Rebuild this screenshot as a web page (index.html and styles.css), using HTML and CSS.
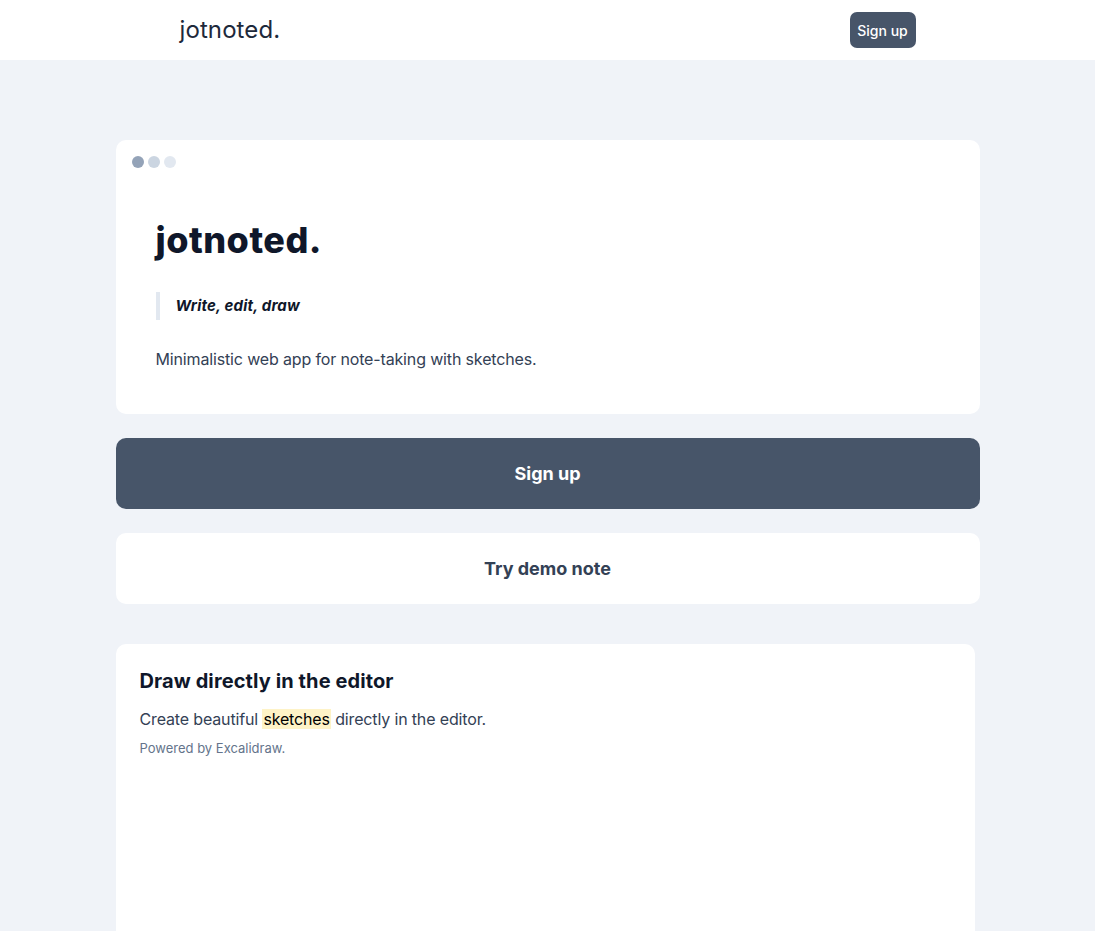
FILE: index.html
```html
<!DOCTYPE html>
<html lang="en">
<head>
<meta charset="utf-8">
<title>jotnoted.</title>
<link rel="stylesheet" href="styles.css">
</head>
<body>
<header class="topbar">
  <div class="topbar-inner">
    <a class="brand" href="#">jotnoted.</a>
    <a class="nav-btn" href="#">Sign up</a>
  </div>
</header>
<main class="main">
  <section class="hero card">
    <div class="dots"><span class="dot d1"></span><span class="dot d2"></span><span class="dot d3"></span></div>
    <div class="hero-body">
      <h1 class="hero-title">jotnoted.</h1>
      <blockquote class="quote">Write, edit, draw</blockquote>
      <p class="lead">Minimalistic web app for note-taking with sketches.</p>
    </div>
  </section>
  <a class="big-btn primary" href="#">Sign up</a>
  <a class="big-btn secondary" href="#">Try demo note</a>
  <section class="feature card">
    <h2 class="feature-title">Draw directly in the editor</h2>
    <p class="feature-text">Create beautiful <mark class="hl">sketches</mark> directly in the editor.</p>
    <p class="feature-note">Powered by Excalidraw.</p>
  </section>
</main>
</body>
</html>
```

FILE: styles.css
```css
* { box-sizing: border-box; }
html, body { margin: 0; padding: 0; }
body {
  background: #f0f3f8;
  font-family: Inter, "Noto Sans", sans-serif;
  color: #334155;
  overflow: hidden;
}
a { text-decoration: none; }

.topbar {
  background: #ffffff;
  height: 60px;
}
.topbar-inner {
  max-width: 768px;
  margin: 0 auto;
  padding: 0 16px;
  height: 100%;
  display: flex;
  align-items: center;
  justify-content: space-between;
}
.brand {
  font-size: 24px;
  font-weight: 400;
  color: #1e293b;
  letter-spacing: 0.1px;
  margin-top: -1px;
}
.nav-btn {
  background: #475569;
  color: #fff;
  font-size: 14px;
  font-weight: 500;
  height: 36px;
  width: 66px;
  border-radius: 7px;
  display: flex;
  align-items: center;
  justify-content: center;
}

.main {
  max-width: 864px;
  margin: 80px auto 0;
  display: flex;
  flex-direction: column;
}
.card {
  background: #fff;
  border-radius: 10px;
}
.hero {
  padding: 16px 16px 43px;
}
.dots {
  display: flex;
  gap: 4px;
}
.dot {
  width: 12px;
  height: 12px;
  border-radius: 50%;
}
.d1 { background: #94a3b8; }
.d2 { background: #cbd5e1; }
.d3 { background: #e2e8f0; }
.hero-body {
  padding: 52px 24px 0;
}
.hero-title {
  margin: 0;
  font-size: 36px;
  line-height: 40px;
  font-weight: 800;
  color: #0f172a;
  letter-spacing: 0.5px;
}
.quote {
  margin: 32px 0 0;
  border-left: 4px solid #e2e8f0;
  padding-left: 16px;
  font-size: 15px;
  line-height: 28px;
  font-style: italic;
  font-weight: 700;
  color: #0f172a;
  letter-spacing: 0.2px;
}
.lead {
  margin: 27px 0 0;
  font-size: 16px;
  line-height: 24px;
  color: #334155;
  letter-spacing: -0.15px;
}

.big-btn {
  height: 71px;
  border-radius: 10px;
  display: flex;
  align-items: center;
  justify-content: center;
  font-size: 18px;
  font-weight: 700;
}
.primary {
  margin-top: 24px;
  background: #475569;
  color: #fff;
}
.secondary {
  margin-top: 24px;
  background: #fff;
  color: #334155;
  padding-bottom: 1px;
}

.feature {
  margin-top: 40px;
  margin-right: 5px;
  padding: 23px 24px 24px;
  height: 420px;
}
.feature-title {
  margin: 0;
  font-size: 20px;
  line-height: 28px;
  font-weight: 700;
  color: #0f172a;
  letter-spacing: 0.1px;
}
.feature-text {
  margin: 12px 0 0;
  font-size: 16px;
  line-height: 24px;
  letter-spacing: -0.15px;
}
.hl {
  background: #fef3c7;
  color: #000;
  padding: 0 1px;
}
.feature-note {
  margin: 8px 0 0;
  font-size: 13px;
  line-height: 18px;
  color: #64748b;
}
```
